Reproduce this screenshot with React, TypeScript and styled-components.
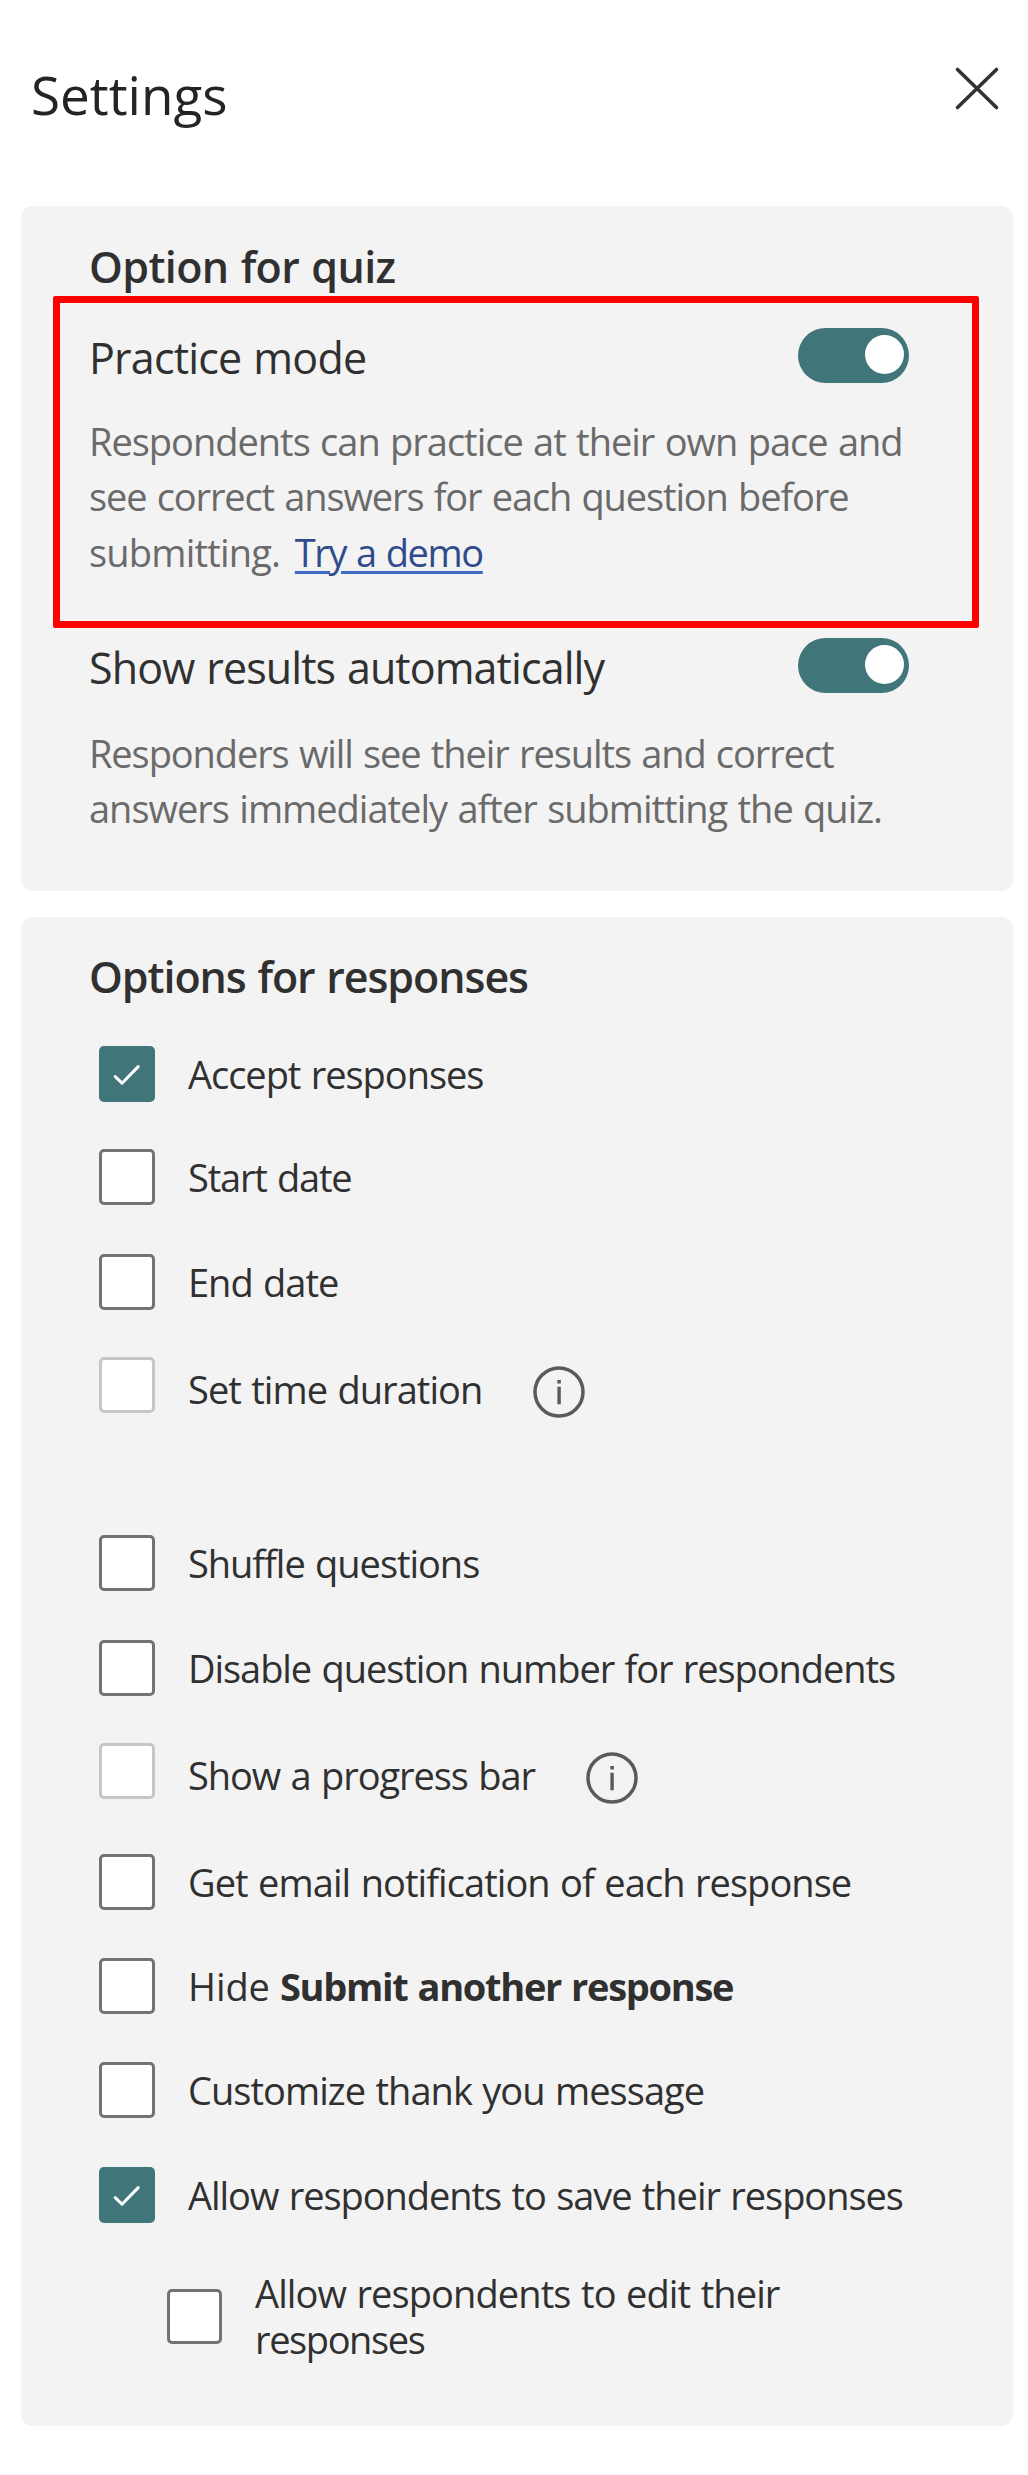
import React from 'react';
import styled, { createGlobalStyle } from 'styled-components';

const color = {
  teal: '#40757a',
  panel: '#f3f3f3',
  text: '#303030',
  muted: '#6a6a6a',
  border: '#737373',
  borderDisabled: '#c6c6c6',
};

const GlobalStyle = createGlobalStyle`
  *, *::before, *::after { box-sizing: border-box; }
  body {
    margin: 0;
    background: #fff;
    color: ${color.text};
    font-family: 'Open Sans', 'Noto Sans', sans-serif;
  }
`;

const Pane = styled.main`
  display: flex;
  flex-direction: column;
  width: 1028px;
  height: 2475px;
  padding: 0 15px 0 21px;
`;

const Header = styled.header`
  display: flex;
  justify-content: space-between;
  align-items: flex-start;
  height: 206px;
  padding: 59px 12px 0 10px;
`;

const Title = styled.h1`
  margin: 0;
  font-size: 53px;
  font-weight: 400;
  line-height: 72px;
  color: #242424;
`;

const CloseButton = styled.button`
  display: flex;
  margin-top: 6px;
  padding: 0;
  border: 0;
  background: none;
  color: #333;
`;

const Card = styled.section<{ $height: number; $top: number }>`
  flex: none;
  height: ${(p) => p.$height}px;
  padding-top: ${(p) => p.$top}px;
  border-radius: 12px;
  background: ${color.panel};

  & + & { margin-top: 26px; }
`;

const CardTitle = styled.h2<{ $tracking: number }>`
  margin: 0 0 -1px 68px;
  font-size: 43px;
  font-weight: 600;
  line-height: 60px;
  letter-spacing: ${(p) => p.$tracking}px;
  word-spacing: 1.5px;
`;

const Setting = styled.div<{ $highlighted?: boolean }>`
  margin: 0 34px 0 32px;
  border: 7px solid ${(p) => (p.$highlighted ? '#ff0000' : 'transparent')};
  border-radius: 2px;
  height: ${(p) => (p.$highlighted ? 332 : 250)}px;
  padding: ${(p) => (p.$highlighted ? '25px' : '3px')} 63px 0 29px;
`;

const SettingHead = styled.div`
  display: flex;
  justify-content: space-between;
  align-items: center;
  height: 60px;
`;

const SettingName = styled.span<{ $tracking: number }>`
  font-size: 43px;
  line-height: 60px;
  letter-spacing: ${(p) => p.$tracking}px;
  word-spacing: 1.5px;
`;

const Toggle = styled.span`
  display: flex;
  justify-content: flex-end;
  align-items: center;
  width: 111px;
  height: 55px;
  margin-bottom: 6px;
  padding-right: 5px;
  border-radius: 28px;
  background: ${color.teal};

  &::after {
    content: '';
    width: 39px;
    height: 39px;
    margin-bottom: 1px;
    border-radius: 50%;
    background: #fff;
  }
`;

const Description = styled.p<{ $gap: number }>`
  margin: ${(p) => p.$gap}px 0 0;
  color: ${color.muted};
  font-size: 38px;
  line-height: 55.3px;
  white-space: nowrap;
`;

const Line = styled.span<{ $tracking: number }>`
  display: block;
  letter-spacing: ${(p) => p.$tracking}px;
  word-spacing: 1.5px;
`;

const DemoLink = styled.a`
  margin-left: 4px;
  color: #2f4b8c;
  letter-spacing: -1.4px;
  text-decoration: underline;
  text-decoration-color: #4169c4;
  text-decoration-thickness: 3px;
  text-underline-offset: 4px;
`;

const OptionRow = styled.label<{ $gap: number; $nested?: boolean }>`
  display: flex;
  align-items: ${(p) => (p.$nested ? 'center' : 'flex-start')};
  height: ${(p) => (p.$nested ? 92 : 56)}px;
  margin: ${(p) => p.$gap}px 0 0 ${(p) => (p.$nested ? 146 : 78)}px;
`;

const Box = styled.span<{ $checked?: boolean; $disabled?: boolean; $size?: number }>`
  display: flex;
  flex: none;
  width: ${(p) => p.$size ?? 56}px;
  height: ${(p) => p.$size ?? 56}px;
  border: ${(p) => (p.$checked ? 0 : 3)}px solid
    ${(p) => (p.$disabled ? color.borderDisabled : color.border)};
  border-radius: 5px;
  background: ${(p) => (p.$checked ? color.teal : '#fff')};
`;

const OptionLabel = styled.span<{ $tracking: number; $drop?: number; $nested?: boolean }>`
  margin: ${(p) => p.$drop ?? 0}px 0 0 33px;
  font-size: 38px;
  line-height: ${(p) => (p.$nested ? 46 : 56)}px;
  letter-spacing: ${(p) => p.$tracking}px;
  word-spacing: 1.5px;
  white-space: nowrap;
`;

const Strong = styled.strong`
  font-weight: 700;
  letter-spacing: -1.3px;
`;

const InfoButton = styled.span`
  display: flex;
  margin: 9px 0 0 51px;
  color: #5a5a5a;
`;

const CheckMark = () => (
  <svg width="56" height="56" viewBox="0 0 56 56" fill="none">
    <path d="M16.2 30.6 23 37.2 39.2 20.6" stroke="#fff" strokeWidth="3" strokeLinecap="round" strokeLinejoin="round" />
  </svg>
);

const Info = () => (
  <InfoButton>
    <svg width="52" height="52" viewBox="0 0 52 52">
      <circle cx="26" cy="26" r="24" fill="none" stroke="currentColor" strokeWidth="3.5" />
      <path d="M24.3 14h3.6v3.5h-3.6zM24.4 20.8h3.4v17.4h-3.4z" fill="currentColor" />
    </svg>
  </InfoButton>
);

type Option = {
  text: React.ReactNode;
  gap: number;
  tracking: number;
  drop?: number;
  checked?: boolean;
  disabled?: boolean;
  info?: boolean;
};

const options: Option[] = [
  { text: 'Accept responses', gap: 40, tracking: -1.03, checked: true },
  { text: 'Start date', gap: 47, tracking: -1.17 },
  { text: 'End date', gap: 49, tracking: -1 },
  { text: 'Set time duration', gap: 47, tracking: -0.96, drop: 4, disabled: true, info: true },
  { text: 'Shuffle questions', gap: 122, tracking: -1.03 },
  { text: 'Disable question number for respondents', gap: 49, tracking: -1.06 },
  { text: 'Show a progress bar', gap: 47, tracking: -1.05, drop: 4, disabled: true, info: true },
  { text: 'Get email notification of each response', gap: 55, tracking: -0.94 },
  { text: <>Hide<Strong> Submit another response</Strong></>, gap: 48, tracking: -0.1 },
  { text: 'Customize thank you message', gap: 48, tracking: -0.96 },
  { text: 'Allow respondents to save their responses', gap: 49, tracking: -1.04, checked: true },
];

export default function App() {
  return (
    <>
      <GlobalStyle />
      <Pane>
        <Header>
          <Title>Settings</Title>
          <CloseButton aria-label="Close">
            <svg width="48" height="48" viewBox="0 0 48 48" fill="none" stroke="currentColor" strokeWidth="3.6" strokeLinecap="round">
              <path d="M4.5 4.5 43.5 42.5M43.5 4.5 4.5 42.5" />
            </svg>
          </CloseButton>
        </Header>

        <Card $height={685} $top={31}>
          <CardTitle $tracking={-0.6}>Option for quiz</CardTitle>
          <Setting $highlighted>
            <SettingHead>
              <SettingName $tracking={-0.8}>Practice mode</SettingName>
              <Toggle />
            </SettingHead>
            <Description $gap={26}>
              <Line $tracking={-1.01}>Respondents can practice at their own pace and</Line>
              <Line $tracking={-1.12}>see correct answers for each question before</Line>
              <Line $tracking={-0.8}>submitting. <DemoLink>Try a demo</DemoLink></Line>
            </Description>
          </Setting>
          <Setting>
            <SettingHead>
              <SettingName $tracking={-0.91}>Show results automatically</SettingName>
              <Toggle />
            </SettingHead>
            <Description $gap={28}>
              <Line $tracking={-1.09}>Responders will see their results and correct</Line>
              <Line $tracking={-1}>answers immediately after submitting the quiz.</Line>
            </Description>
          </Setting>
        </Card>

        <Card $height={1509} $top={30}>
          <CardTitle $tracking={-1.05}>Options for responses</CardTitle>
          {options.map((o, i) => (
            <OptionRow key={i} $gap={o.gap}>
              <Box $checked={o.checked} $disabled={o.disabled}>{o.checked && <CheckMark />}</Box>
              <OptionLabel $tracking={o.tracking} $drop={o.drop}>{o.text}</OptionLabel>
              {o.info && <Info />}
            </OptionRow>
          ))}
          <OptionRow $gap={47} $nested>
            <Box $size={55} />
            <OptionLabel $nested $tracking={-0.9}>
              <Line $tracking={-0.9}>Allow respondents to edit their</Line>
              <Line $tracking={-1.4}>responses</Line>
            </OptionLabel>
          </OptionRow>
        </Card>
      </Pane>
    </>
  );
}
